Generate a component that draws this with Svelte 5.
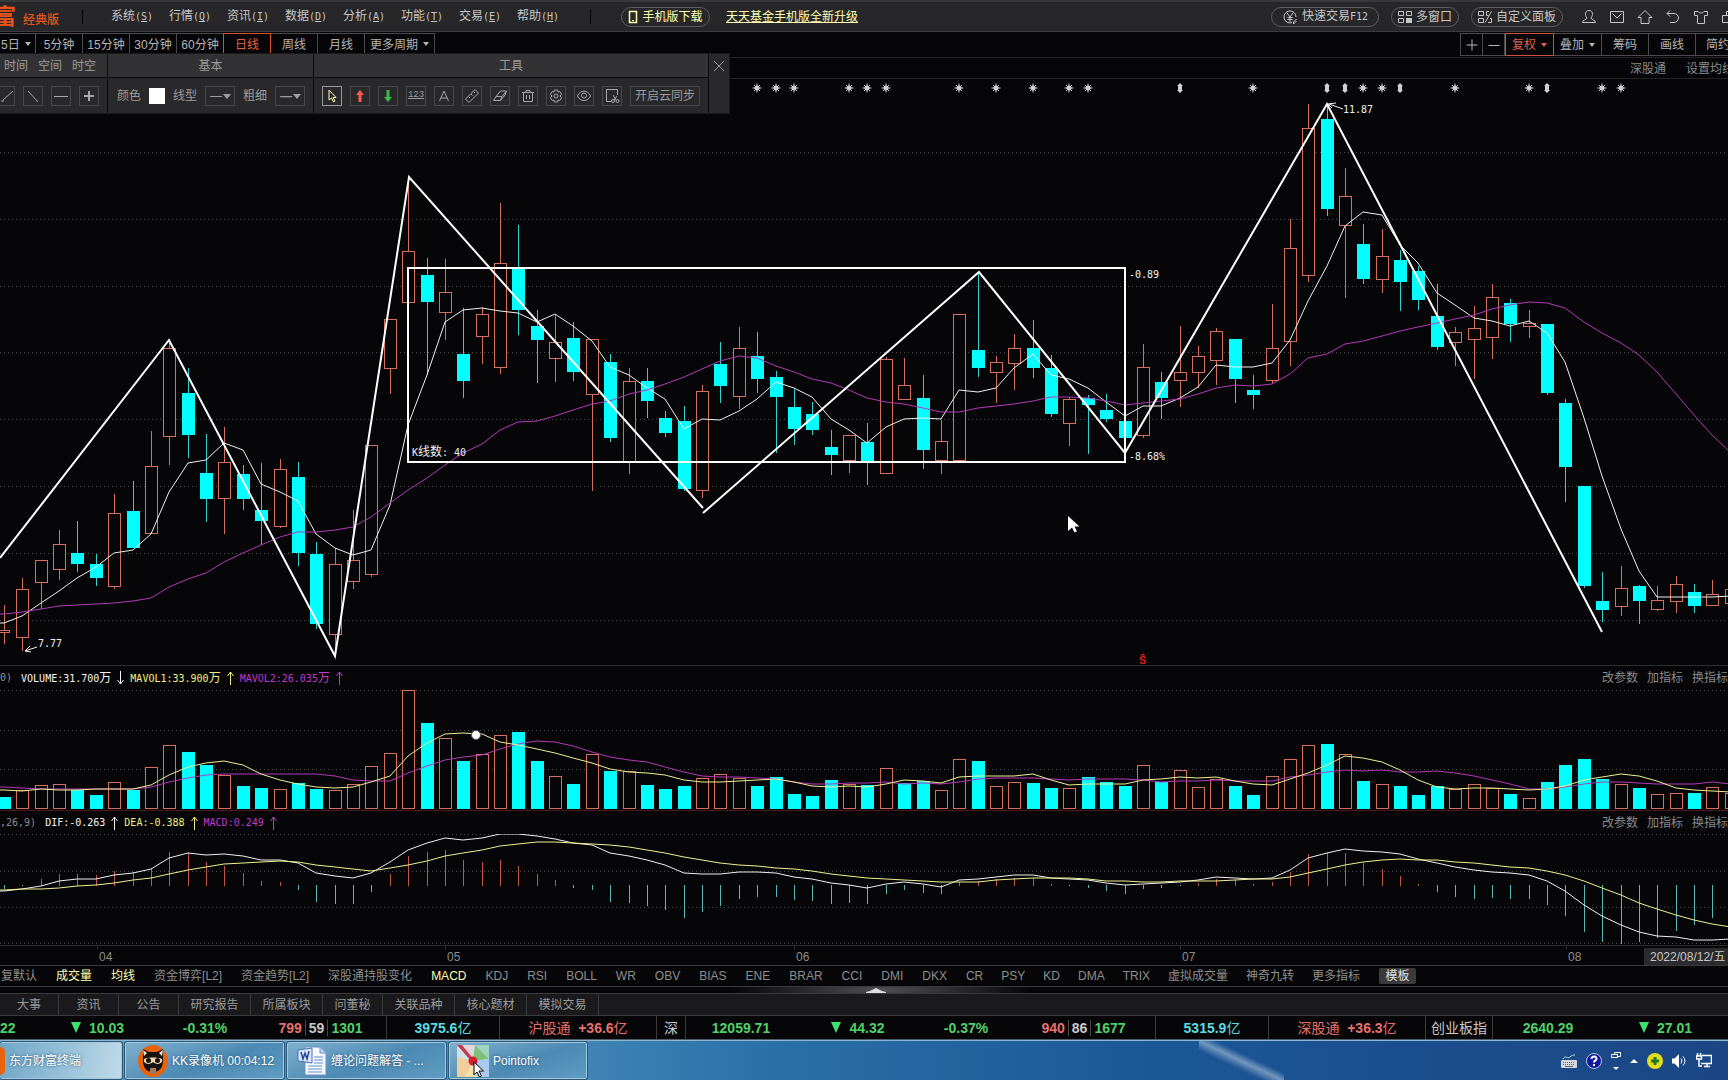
<script>
  const menus = [['系统', 'S'], ['行情', 'Q'], ['资讯', 'I'], ['数据', 'D'], ['分析', 'A'], ['功能', 'T'], ['交易', 'E'], ['帮助', 'H']];
  const periods = ['5分钟', '15分钟', '30分钟', '60分钟', '日线', '周线', '月线'];
  const indicatorGroups = [
    ['复默认', '成交量', '均线', '资金博弈[L2]', '资金趋势[L2]', '深股通持股变化', 'MACD', 'KDJ', 'RSI', 'BOLL', 'WR', 'OBV', 'BIAS', 'ENE', 'BRAR', 'CCI', 'DMI', 'DKX'],
    ['CR', 'PSY', 'KD', 'DMA', 'TRIX', '虚拟成交量', '神奇九转', '更多指标']
  ];
  const lit = ['成交量', '均线', 'MACD'];
  const infoTabs = ['大事', '资讯', '公告', '研究报告', '所属板块', '问董秘', '关联品种', '核心题材', '模拟交易'];

  // [rising, high, body top, body bottom, low]
  const candles = [
    [1,605,630,632,644],[1,578,589,637,651],[1,560,560,582,609],[1,530,544,569,580],[0,521,553,564,572],[0,554,564,578,586],
    [1,494,513,586,589],[0,481,511,548,548],[1,431,466,533,533],[1,342,348,436,465],[0,368,393,435,458],[0,434,473,499,522],
    [1,427,462,498,534],[0,465,474,499,510],[0,463,510,521,545],[1,459,469,526,528],[0,462,477,553,566],[0,542,554,624,629],
    [1,548,564,634,652],[1,510,560,581,589],[1,445,445,574,577],[1,319,319,368,394],[1,180,251,302,302],[0,258,275,302,375],
    [1,259,292,312,340],[0,308,354,381,398],[1,307,314,336,364],[1,203,263,367,374],[0,225,268,310,335],[0,310,326,340,383],
    [1,315,342,358,382],[0,322,338,372,381],[1,339,339,394,491],[0,354,362,438,442],[1,368,381,462,474],[0,368,381,401,418],
    [0,411,418,433,437],[0,406,421,489,491],[1,385,391,490,498],[0,342,364,386,403],[1,327,348,396,409],[0,332,356,379,393],
    [0,371,377,397,453],[0,389,407,429,445],[0,402,414,430,435],[0,430,447,455,475],[1,435,435,460,473],[0,423,442,462,485],
    [1,357,359,473,473],[1,358,385,399,399],[0,375,398,450,469],[1,420,441,460,474],[1,314,314,460,460],[0,272,350,368,377],
    [1,356,362,372,403],[1,334,348,363,390],[0,320,348,368,378],[0,355,368,414,417],[1,397,399,423,446],[0,395,398,405,454],
    [0,394,410,419,422],[0,421,421,438,453],[1,344,367,435,438],[0,372,382,398,419],[1,326,372,380,407],[1,346,356,372,388],
    [1,328,331,360,385],[0,339,339,379,403],[0,375,390,395,409],[1,304,348,380,383],[1,219,248,341,366],[1,104,128,275,282],
    [0,104,119,209,216],[1,168,196,225,298],[0,224,244,279,284],[1,229,256,279,293],[0,250,260,282,311],[0,266,271,300,310],
    [0,284,316,347,350],[1,327,332,342,366],[1,306,328,339,379],[1,284,297,337,359],[0,299,303,324,342],[1,310,323,326,338],
    [0,324,324,393,395],[0,399,403,467,502],[0,486,486,586,588],[0,572,601,610,622],[1,566,588,606,616],[0,585,586,601,624],
    [1,586,600,609,611],[1,576,584,601,613],[0,584,592,606,613],[1,580,594,605,605],[1,585,589,603,603]
  ];
  const maFast = [623,616,603,591,578,567,553,550,534,492,463,460,443,450,484,492,501,534,548,555,550,505,425,375,322,310,308,311,313,322,314,326,341,367,375,388,399,429,419,420,411,399,382,388,397,419,430,443,427,419,418,419,390,392,388,368,354,375,379,388,402,416,406,406,398,387,365,367,367,363,340,301,266,226,212,215,245,263,293,305,318,321,326,321,333,362,418,476,529,571,597,597,597,597,596];
  const maSlow = [614,612,609,606,605,604,603,601,598,587,579,573,562,553,545,537,532,532,530,527,517,503,490,478,465,453,444,430,422,421,416,410,404,401,394,390,384,377,369,361,356,358,366,372,379,383,390,398,402,404,408,412,412,408,406,404,401,397,397,398,401,405,403,401,399,394,388,385,386,384,374,358,354,344,341,336,331,327,323,319,315,309,305,302,303,308,322,333,343,355,372,394,415,435,453];

  const volTops = [797,790,785,784,790,795,782,790,767,745,752,765,775,786,788,789,783,789,790,784,766,753,690,723,738,761,754,735,732,761,776,784,754,771,771,785,789,786,778,774,778,786,777,794,796,780,784,785,768,783,781,790,759,761,786,782,783,788,788,777,782,786,765,782,770,787,779,786,795,776,759,745,744,754,781,784,786,795,786,789,784,788,794,798,782,765,759,779,784,788,794,793,793,787,793];
  const volUpExtra = { 0: 0, 39: 1, 49: 0 };
  const volFast = [790,791,789,790,790,789,789,789,785,775,767,763,761,765,774,780,784,787,788,787,782,776,756,743,734,733,734,742,745,749,753,758,763,769,772,773,775,780,782,782,781,780,779,782,786,787,786,787,784,780,781,783,777,776,776,776,774,780,785,784,784,784,780,779,777,778,777,781,784,785,779,773,765,756,758,762,770,780,787,789,788,788,789,790,789,786,780,777,774,776,781,788,790,791,792];
  const volSlow = [787,788,789,789,789,789,789,789,787,782,778,775,774,774,774,774,774,774,776,780,781,781,773,766,760,757,755,749,744,741,742,746,752,757,760,762,767,772,776,777,777,778,779,782,784,784,783,783,782,784,783,784,782,779,778,778,778,779,780,779,779,779,780,782,781,781,780,781,781,781,777,775,772,770,771,770,772,772,771,773,776,780,784,789,789,787,784,782,782,783,784,784,784,782,784];

  const hist = [889,886,879,874,874,875,871,872,868,852,853,862,866,873,881,882,890,902,904,904,892,874,856,852,850,860,862,860,866,874,880,888,890,902,903,906,910,918,912,906,899,897,897,900,901,904,903,904,894,890,893,894,882,881,879,878,878,884,886,888,891,894,889,888,886,883,879,880,884,882,872,854,853,853,863,869,876,884,892,897,899,898,899,899,905,916,932,942,944,942,938,931,925,918,912];
  const dif = [891,889,886,881,879,879,875,873,869,858,853,855,854,856,860,860,863,873,876,878,873,862,850,843,838,840,838,834,834,836,839,843,845,853,856,860,865,873,874,874,872,872,873,877,879,883,885,888,884,882,884,887,880,879,877,875,875,878,879,880,883,885,884,883,882,880,877,878,879,878,870,858,853,849,851,852,854,859,863,867,870,872,873,875,881,891,905,916,925,932,936,937,940,940,939];
  const dea = [890,889,889,888,886,885,883,880,878,874,870,867,864,863,862,861,862,865,867,869,871,868,865,861,856,853,850,846,844,842,842,843,844,845,847,850,853,857,860,863,865,866,868,869,871,874,876,878,879,880,881,882,882,882,880,879,878,878,878,879,881,881,882,882,881,881,881,880,879,879,877,873,869,865,862,860,859,860,860,862,863,865,867,868,871,875,881,888,895,903,909,915,920,924,927];

  const stars = [41,42,43,46,47,48,52,54,56,58,59,68,74,75,79,83,87,88];
  const diamonds = [64,72,73,76,84];
  const months = [['04', 97], ['05', 445], ['06', 794], ['07', 1180], ['08', 1566]];

  const x = (i) => Math.round(4 + i * 18.37);
  const line = (ys) => ys.map((y, i) => (i === 0 ? `0,${y} ` : '') + `${x(i)},${y}`).join(' ');
  const volUp = (i) => (i in volUpExtra ? volUpExtra[i] : candles[i][0]);

  const volTitle = [['w', 'VOLUME:31.700', '万', 'down'], ['y', 'MAVOL1:33.900', '万', 'up'], ['m', 'MAVOL2:26.035', '万', 'up']];
  const macdTitle = [['w', 'DIF:-0.263', '', 'up'], ['y', 'DEA:-0.388', '', 'up'], ['m', 'MACD:0.249', '', 'up']];
</script>

{#snippet titleRow(lead, items)}
  <div class="ptitle">
    <span class="lead">{lead}</span>
    {#each items as [tone, text, unit, dir]}
      <span class="val {tone}">{text}<i>{unit}</i></span>
      <svg class="arr {tone}" viewBox="0 0 9 14" width="9" height="14" fill="none" stroke="currentColor">
        {#if dir === 'up'}<path d="M4.5 1V14M1.5 5l3-4 3 4" />{:else}<path d="M4.5 0V13M1.5 9l3 4 3-4" />{/if}
      </svg>
    {/each}
    <div class="plinks"><button>改参数</button><button>加指标</button><button class="cut">换指标</button></div>
  </div>
{/snippet}

<div class="page">
  <header class="menu">
    <div class="brand"><b>富</b><span>经典版</span></div>
    <nav class="menus">
      {#each menus as [name, key]}
        <button>{name}<small>(<u>{key}</u>)</small></button>
      {/each}
    </nav>
    <button class="pill phone">
      <svg viewBox="0 0 10 14" width="10" height="14" fill="none" stroke="currentColor"><path d="M1.500 1.500h7v11h-7z" stroke-width="1.500" /><path d="M4 10.5h2" /></svg>
      手机版下载
    </button>
    <a class="promo" href="#fund">天天基金手机版全新升级</a>
    <div class="right">
      <button class="pill w108">
        <svg viewBox="0 0 16 16" width="16" height="16" fill="none" stroke="currentColor"><path d="M14 8A6 6 0 1 0 10 13.600M5 4l3 4 3-4M8 8v5M5.500 8.500h5M5.500 10.500h5M14.500 10l-3 3v2l3-3" /></svg>
        <span>快速交易<small>F12</small></span>
      </button>
      <button class="pill w68">
        <svg viewBox="0 0 14 14" width="14" height="14" fill="none" stroke="currentColor"><path d="M.5 1.500h5v4h-5zM8.500 1.500h5v4h-5zM.5 8.500h5v4h-5z" /><path d="M8 8h6v5H8z" fill="currentColor" stroke="none" /></svg>
        多窗口
      </button>
      <button class="pill w92">
        <svg viewBox="0 0 14 14" width="14" height="14" fill="none" stroke="currentColor"><path d="M.5 1.500h5v4h-5zM11 1.500H8.500v4h2M13.500 1.500L7 12.500M.5 8.500h5v4h-5zM10 12.500h3.500V8.500H12" /></svg>
        自定义面板
      </button>
      <div class="sys">
        <button aria-label="用户"><svg viewBox="0 0 16 16" width="16" height="16"><path d="M6 9C3.500 6 4 1.500 8 1.500S12.500 6 10 9c0 2 4.500 1.500 4.500 4.500h-13C1.500 10.500 6 11 6 9z" /></svg></button>
        <button aria-label="邮件"><svg viewBox="0 0 16 16" width="16" height="16"><path d="M1.500 2.500h13v11h-13zM3.500 4.500L8 9l4.500-4.500" /></svg></button>
        <button aria-label="主页"><svg viewBox="0 0 16 16" width="16" height="16"><path d="M8 1.500L1 8.500h3v6h8v-6h3z" /></svg></button>
        <button aria-label="返回"><svg viewBox="0 0 16 16" width="16" height="16"><path d="M5 1.500L2 4.500l3 3M2 4.500h7a4.500 4.500 0 0 1 0 9H5" /></svg></button>
        <button aria-label="皮肤"><svg viewBox="0 0 16 16" width="16" height="16"><path d="M5 2.500H1.500v4h3v8h7v-8h3v-4H11c-1 2-5 2-6 0z" /></svg></button>
        <button aria-label="窗口" class="half"><svg viewBox="0 0 16 16" width="16" height="16"><path d="M5.500 6V2.500h9v8H11M1.500 6.500h9v7h-9z" /></svg></button>
      </div>
    </div>
  </header>

  <div class="bar">
    <div class="periods">
      <button class="p0">5日<i class="caret"></i></button>
      {#each periods as p}<button class:active={p === '日线'}>{p}</button>{/each}
      <button class="more">更多周期<i class="caret"></i></button>
    </div>
    <div class="views">
      <button class="sq" aria-label="放大"><svg viewBox="0 0 12 12" width="12" height="12" stroke="currentColor"><path d="M6 .5v11M.5 6h11" /></svg></button>
      <button class="sq" aria-label="缩小"><svg viewBox="0 0 12 12" width="12" height="12" stroke="currentColor"><path d="M.5 6.500h11" /></svg></button>
      <button class="drop hot">复权<i class="caret"></i></button>
      <button class="drop">叠加<i class="caret"></i></button>
      <button>筹码</button>
      <button>画线</button>
      <button class="last">简约</button>
    </div>
  </div>

  <div class="sub"><span>深股通</span><button>设置均线</button></div>

  <section class="toolbox">
    <div class="col c1">
      <div class="head"><span>时间</span><span>空间</span><span>时空</span></div>
      <div class="body">
        <button class="t first" aria-label="斜线"><svg viewBox="0 0 18 18"><path d="M1 14h3M3 13L13 4" /></svg></button>
        <button class="t" aria-label="反斜线"><svg viewBox="0 0 18 18"><path d="M4 4l10 11" /></svg></button>
        <button class="t" aria-label="水平线"><svg viewBox="0 0 18 18"><path d="M2 9.500h14" /></svg></button>
        <button class="t bold" aria-label="添加"><svg viewBox="0 0 18 18"><path d="M9 4v10M4 9h10" /></svg></button>
      </div>
    </div>
    <div class="col c2">
      <div class="head">基本</div>
      <div class="body">
        <label for="clr">颜色</label><input id="clr" type="color" value="#ffffff" />
        <label for="ls">线型</label><span class="sel"><select id="ls"><option>—</option></select></span>
        <label for="lw">粗细</label><span class="sel b"><select id="lw"><option>—</option></select></span>
      </div>
    </div>
    <div class="col c3">
      <div class="head">工具</div>
      <div class="body">
        <button class="t on" aria-label="选择"><svg viewBox="0 0 18 18"><path d="M6 3v10l2.500-2 2 4 1.500-1-2-3.500h3z" stroke="#ffffb0" /></svg></button>
        <button class="t" aria-label="上箭头"><svg viewBox="0 0 18 18"><path d="M9 3l4 5h-2.500v7h-3V8H5z" fill="#ff5a50" stroke="none" /></svg></button>
        <button class="t" aria-label="下箭头"><svg viewBox="0 0 18 18"><path d="M9 15l4-5h-2.500V3h-3v7H5z" fill="#3cb84a" stroke="none" /></svg></button>
        <button class="t num" aria-label="标数">123</button>
        <button class="t" aria-label="文字"><svg viewBox="0 0 18 18"><path d="M4.500 14L9 4l4.500 10M6 11h6" /></svg></button>
        <button class="t" aria-label="测量"><svg viewBox="0 0 18 18"><path d="M2.500 12L12 2.500l3.500 3.500L6 15.500zM8 7l1.500 1.500M10.500 4.500L12 6M5.500 9.500L7 11" /></svg></button>
        <button class="t" aria-label="橡皮"><svg viewBox="0 0 18 18"><path d="M2.500 13.500L5 9.500 9.500 4h6L14 8l-4.500 5.500zM5 9.500h6L15 4.500M11 9.500l-1.500 4" /></svg></button>
        <button class="t" aria-label="删除"><svg viewBox="0 0 18 18"><path d="M3 5.500h12M7 5V3.500h4V5M4.500 5.500v9h9v-9M7.500 8v4M10.500 8v4" /></svg></button>
        <button class="t" aria-label="设置"><svg viewBox="0 0 18 18"><circle cx="9" cy="9" r="2" /><path d="M7.500 3h3l.5 2 2-.5 1.500 2.500L13 9l1.500 2-1.500 2.500-2-.5-.5 2h-3L7 13l-2 .5L3.500 11 5 9 3.500 7 5 4.500 7 5z" /></svg></button>
        <button class="t" aria-label="显示"><svg viewBox="0 0 18 18"><path d="M2.500 9C5 2.500 13 2.500 15.500 9 13 15 5 15 2.500 9z" /><circle cx="9" cy="8.500" r="2.500" /></svg></button>
        <button class="t" aria-label="截图"><svg viewBox="0 0 18 18"><path d="M8 14.500H3.500v-12h11V8M10 8l3 5M14 9l-3 4" /><circle cx="10" cy="14" r="1.500" /><circle cx="14.500" cy="14" r="1.500" /></svg></button>
        <button class="sync">开启云同步</button>
      </div>
    </div>
    <button class="close" aria-label="关闭"><svg viewBox="0 0 12 12" width="12" height="12" stroke="#999"><path d="M1 1l10 10M11 1L1 11" /></svg></button>
  </section>

  <main>
    <svg class="chart" viewBox="0 79 1728 586" role="img" aria-label="日线">
      <g class="grid">{#each [152,219,286,352,419,486,553,620] as y}<path d="M0 {y}.5H1728" />{/each}</g>
      <g class="marks">
        {#each stars as i}<path transform="translate({x(i)} 88)" d="M-4.500 0h9M0-4.500v9M-3-3l6 6M3-3l-6 6M-2 0h4" /><circle cx={x(i)} cy="88" r="2.500" />{/each}
        {#each diamonds as i}<path class="f" transform="translate({x(i)} 88)" d="M0-5l3 3h-1v4h1l-3 3-3-3h1v-4h-1z" />{/each}
      </g>
      <g shape-rendering="crispEdges">
        {#each candles as [up, h, t, b, l], i}
          {#if up}
            <path class="red" d="M{x(i)}.5 {h}V{t}M{x(i)}.5 {b}V{l}M{x(i) - 6}.5 {t}.5h12V{b}.5h-12z" />
          {:else}
            <path class="cyl" d="M{x(i)}.5 {h}V{l}" /><rect class="cyan" x={x(i) - 6} y={t} width="13" height={Math.max(b - t, 2)} />
          {/if}
        {/each}
      </g>
      <polyline class="ln w" points={line(maFast)} />
      <polyline class="ln m" points={line(maSlow)} />
      <g class="draw">
        <path d="M0 558L169 340L335 656L409 177L703 508M703 513L979 272L1125 453L1327 104L1602 632" />
        <path d="M408 268H1125V462H408z" />
      </g>
      <g class="lbl">
        <text x="412" y="456">K<tspan class="cj">线数</tspan>: 40</text>
        <text x="1129" y="278">-0.89</text>
        <text x="1129" y="460">-8.68%</text>
        <text x="1343" y="113">11.87</text>
        <text x="38" y="647">7.77</text>
      </g>
      <path class="ln w" d="M1343 109L1329 104M1336 103L1328 104L1332 108M37 647L25 651M30 646L25 651L31 652" />
      <text class="sig" x="1139" y="664">S</text>
      <path d="M1140 655.500l3-2 3 2z" fill="#e01818" />
      <path d="M1068 516v15l4-3.500 2.500 5 2.500-1.200-2.500-4.800h5z" fill="#fff" />
    </svg>

    {@render titleRow('0)', volTitle)}
    <svg class="chart" viewBox="0 690 1728 120" role="img" aria-label="成交量">
      <g class="grid">{#each [690,730,769] as y}<path d="M0 {y}.5H1728" />{/each}</g>
      <g shape-rendering="crispEdges">
        {#each volTops as t, i}
          {#if volUp(i)}<rect class="red" x={x(i) - 5.5} y={t + 0.5} width="12" height={808 - t} />
          {:else}<rect class="cyan" x={x(i) - 6} y={t} width="13" height={809 - t} />{/if}
        {/each}
      </g>
      <polyline class="ln m" points={line(volSlow)} />
      <polyline class="ln y" points={line(volFast)} />
      <circle cx="476" cy="735" r="4.500" fill="#fff" stroke="#555" />
    </svg>

    <div class="redline"></div>
    {@render titleRow(',26,9)', macdTitle)}
    <svg class="chart" viewBox="0 834 1728 111" role="img" aria-label="MACD">
      <g class="grid">{#each [834,871,907,943] as y}<path d="M0 {y}.5H1728" />{/each}</g>
      <g shape-rendering="crispEdges">
        {#each hist as v, i}<path class={v < 886 ? 'redh' : 'cyh'} d="M{x(i)}.5 {v < 886 ? 886 : 885}V{v}" />{/each}
      </g>
      <polyline class="ln w" points={line(dif)} />
      <polyline class="ln y" points={line(dea)} />
    </svg>
    <svg class="axis" viewBox="0 946 1728 19">
      {#each months as [m, mx]}
        <path d="M{mx}.5 946v3" stroke="#2c2c2e" /><text x={mx + 2} y="961">{m}</text>
      {/each}
      <rect x="1644" y="948" width="84" height="17" fill="#2b2b2d" />
      <text class="date" x="1650" y="961">2022/08/12/五</text>
    </svg>
  </main>

  <nav class="inds">
    {#each indicatorGroups as group, gi}
      <div class="igroup" class:tight={gi === 1}>
        {#each group as n}<button class:lit={lit.includes(n)}>{n}</button>{/each}
      </div>
    {/each}
    <button class="tpl">模板</button>
  </nav>
  <div class="grip"><svg viewBox="0 0 20 5" width="20" height="5"><path d="M0 5v-1l4-1 6-3 6 3 4 1v1z" fill="#ddd" /></svg></div>
  <nav class="info">
    {#each infoTabs as t}<button class:wide={t.length > 3}>{t}</button>{/each}
  </nav>

  <div class="ticker">
    <span class="g start">22</span>
    <span class="g"><i class="dn"></i>10.03</span>
    <span class="g">-0.31%</span>
    <span class="cnt"><b class="r">799</b><b>59</b><b class="g">1301</b></span>
    <span class="c bl">3975.6<em>亿</em></span>
    <span class="r bl"><em>沪股通</em>&nbsp; +36.6<em>亿</em></span>
    <span class="bl"><em>深</em></span>
    <span class="g bl">12059.71</span>
    <span class="g"><i class="dn"></i>44.32</span>
    <span class="g">-0.37%</span>
    <span class="cnt"><b class="r">940</b><b>86</b><b class="g">1677</b></span>
    <span class="c bl">5315.9<em>亿</em></span>
    <span class="r bl"><em>深股通</em>&nbsp; +36.3<em>亿</em></span>
    <span class="bl"><em>创业板指</em></span>
    <span class="g bl">2640.29</span>
    <span class="g"><i class="dn"></i>27.01</span>
  </div>

  <footer class="task">
    <button class="app a1"><i class="orb"></i>东方财富终端</button>
    <button class="app a2">
      <svg viewBox="0 0 30 32" width="30" height="32"><ellipse cx="15" cy="16" rx="15" ry="16" fill="#e8620c" /><path d="M5 4l6 3h8l6-3v12c0 8-5 11-10 11S5 24 5 16z" fill="#17120f" /><path d="M5 5l4 3-3 3zM25 5l-4 3 3 3z" fill="#f3e9d8" /><path d="M6 14c4-2 14-2 18 0v3c-3 3-7 2-9 0-2 2-6 3-9 0z" fill="#f0d9b4" /><circle cx="10.500" cy="15.500" r="2.500" fill="#17120f" /><circle cx="19.500" cy="15.500" r="2.500" fill="#17120f" /><path d="M12 23h6v6h-6z" fill="#9c7a5c" /></svg>
      KK录像机 00:04:12
    </button>
    <button class="app a3">
      <svg viewBox="0 0 30 32" width="30" height="32"><path d="M8 2h15l6 6v22H8z" fill="#f4f8ff" stroke="#6d8fc9" /><path d="M23 2v6h6" fill="#c6d6f0" stroke="#6d8fc9" /><path d="M11 21h14M11 24h14M11 27h14M17 12h9M17 15h9M17 18h9" stroke="#6f8fc4" /><path d="M1 5l14-2v15L1 16z" fill="#dce8fa" stroke="#4a6fb5" /><path d="M4 7l2 7 2-6 2 6 2-8" fill="none" stroke="#1f4a9c" stroke-width="1.500" /></svg>
      缠论问题解答 - ...
    </button>
    <button class="app a4">
      <svg viewBox="0 0 32 32" width="32" height="32"><rect width="32" height="32" rx="2" fill="#cfe0e6" /><path d="M16 16L6 0h12z" fill="#e7d2e0" /><path d="M18 0h14v14z" fill="#9fd4c0" /><path d="M18 0L32 14 16 16z" fill="#7cc07a" /><path d="M16 16l16-2v18H18z" fill="#a9c9ee" /><path d="M0 12l16 4-6 16H0z" fill="#f1cf9d" /><path d="M16 16l4 16H8z" fill="#f6e2a8" /><path d="M0 0h5l12 15-2 2z" fill="#c23a4c" /><circle cx="16" cy="16" r="4.500" fill="#d21f2b" /><path d="M17 17v13l3-3 2.500 5 2-1-2.500-5h4.500z" fill="#fff" stroke="#000" /></svg>
      Pointofix
    </button>
    <div class="tray">
      <svg viewBox="0 0 16 14" width="16" height="14"><path d="M2 5c2-4 5 0 7-2s3-2 5-2" fill="none" stroke="#cdd" /><rect x="0" y="6" width="16" height="8" rx="1" fill="#d4d8dc" /><path d="M2 8.500h12M2 10.500h12" stroke="#667" stroke-dasharray="1 1" /><path d="M4 12.500h8" stroke="#667" /></svg>
      <svg viewBox="0 0 16 16" width="16" height="16"><circle cx="8" cy="8" r="7.500" fill="#14189c" stroke="#b8c4e8" /><path d="M5.500 6c0-3.500 5.500-3 5 0-.3 1.500-2.500 1.500-2.500 3.500M8 11v2" fill="none" stroke="#fff" stroke-width="2" /></svg>
      <svg viewBox="0 0 10 20" width="10" height="20" fill="none" stroke="#fff"><path d="M3.500 3V1.500h6v4H7M.5 3.500h6v3h-6z" /><path d="M2 16h6l-3 3z" fill="#fff" stroke="none" /></svg>
      <svg viewBox="0 0 8 8" width="8" height="8"><path d="M0 6l4-4 4 4z" fill="#fff" /></svg>
      <svg viewBox="0 0 16 16" width="16" height="16"><circle cx="8" cy="8" r="8" fill="#e3dc1e" /><path d="M8 4v8M4 8h8" stroke="#1d7a1d" stroke-width="3" /></svg>
      <svg viewBox="0 0 15 14" width="15" height="14"><path d="M0 4.500h2.500L7 0v14L2.500 9.500H0z" fill="#fff" /><path d="M9 4.500q2 2.500 0 5M11 2.500q4 4.500 0 9" fill="none" stroke="#fff" /></svg>
      <svg viewBox="0 0 16 15" width="16" height="15" fill="none" stroke="#fff"><path d="M6 2.500h9.500v8H5M8 13.500h6M11 11v2.500M1.500 0v3M4.500 0v3M.5 3h5v3h-5zM3 6v7h3" stroke-width="1.500" /></svg>
    </div>
  </footer>
</div>

<style>
  :global(body) { background: #060608; }
  .page { position: relative; overflow: hidden; display: flex; flex-direction: column; background: #060608; color: #b4b4b4; font: 12px/16px "Liberation Sans", "Noto Sans CJK SC", sans-serif; white-space: nowrap; }
  .page *, .page *::after { box-sizing: border-box; }
  button { font: inherit; color: inherit; background: none; border: 0; padding: 0; margin: 0; white-space: nowrap; }
  i, em { font-style: normal; }
  small { font: 10px/16px "DejaVu Sans Mono", monospace; }

  .menu { height: 32px; display: flex; align-items: center; background: #272729; border-top: 2px solid #38383a; border-bottom: 1px solid #3c3c3e; color: #c6c6c6; }
  .brand { display: flex; align-items: center; width: 83px; border-right: 1px solid #000; height: 14px; color: #e4541c; }
  .brand b { width: 16px; font-size: 22px; direction: rtl; overflow: hidden; line-height: 28px; margin-right: 7px; }
  .brand span { padding-top: 6px; font-weight: 500; }
  .menus { display: flex; width: 508px; padding-left: 28px; border-right: 1px solid #000; height: 14px; align-items: center; }
  .menus button { width: 58px; text-align: left; }
  .pill { height: 20px; border: 1px solid #5c5c5e; border-radius: 10px; display: flex; align-items: center; justify-content: center; gap: 4px; }
  .phone { width: 89px; margin: 0 16px 0 30px; color: #ffffb4; }
  .promo { color: #ffffb4; }
  .right { margin-left: auto; display: flex; align-items: center; gap: 12px; }
  .w108 { width: 108px; } .w68 { width: 68px; } .w92 { width: 92px; }
  .sys { display: flex; gap: 12px; padding-left: 6px; overflow: hidden; height: 16px; }
  .sys button { width: 16px; height: 16px; }
  .sys .half { width: 7px; overflow: hidden; }
  .sys svg { display: block; fill: none; stroke: currentColor; }

  .bar { height: 25px; display: flex; justify-content: space-between; align-items: flex-start; padding-top: 1px; }
  .periods, .views { display: flex; border-top: 1px solid #4a4a4c; height: 23px; }
  .periods button { width: 47px; border-right: 1px solid #4a4a4c; }
  .periods .p0 { width: 36px; text-align: left; padding-left: 1px; }
  .periods .active { color: #e8603c; border: 1px solid #d8502c; margin: -1px 0 0 -1px; width: 48px; }
  .periods .more { width: 70px; }
  .caret { display: inline-block; border: 3px solid transparent; border-top: 4px solid currentColor; border-bottom: 0; margin: 0 0 3px 5px; }
  .views { border: 1px solid #4a4a4c; border-right: 0; }
  .views button { width: 47px; border-right: 1px solid #4a4a4c; display: flex; align-items: center; justify-content: center; }
  .views .sq { width: 22px; }
  .views .drop { width: 48px; }
  .views .drop .caret { margin-bottom: 0; }
  .views .hot { width: 49px; color: #e0604c; border: 1px solid #d0503c; margin: -1px 0; }
  .views .last { width: 32px; overflow: hidden; border: 0; justify-content: flex-start; padding-left: 10px; }
  .sub { height: 22px; border-top: 1px solid #222224; border-bottom: 1px solid #222224; display: flex; justify-content: flex-end; align-items: center; gap: 20px; color: #8a8a8a; padding-top: 2px; }
  .sub button { width: 42px; overflow: hidden; text-align: left; }

  .toolbox { position: absolute; left: 0; top: 53px; width: 730px; height: 61px; display: flex; background: #29292b; color: #9c9c9c; border: 1px solid #1a1a1c; border-left: 0; }
  .col { border-right: 1px solid #0c0c0e; display: flex; flex-direction: column; }
  .c1 { width: 108px; } .c2 { width: 206px; } .c3 { width: 395px; }
  .head { height: 24px; background: #323234; border-bottom: 1px solid #0c0c0e; display: flex; align-items: center; justify-content: center; gap: 10px; }
  .c1 .head { justify-content: flex-start; padding-left: 4px; }
  .body { flex: 1; display: flex; align-items: center; gap: 8px; padding-left: 8px; }
  .c1 .body { padding-left: 0; }
  .c2 .body { padding-left: 9px; }
  .t { width: 20px; height: 20px; border: 1px solid #48484a; flex: none; }
  .t svg { display: block; width: 18px; height: 18px; fill: none; stroke: #a8a8a8; }
  .t.first { width: 15px; border-left: 0; }
  .t.bold svg { stroke-width: 2; }
  .t.on { border-color: #9a9a9a; }
  .t.num { font: 9px/10px "Liberation Mono", monospace; padding-bottom: 2px; text-decoration: underline; }
  .sync { width: 70px; height: 20px; border: 1px solid #48484a; line-height: 16px; }
  input[type="color"] { width: 16px; height: 16px; padding: 0; border: 0; background: #fff; }
  input[type="color"]::-webkit-color-swatch-wrapper { padding: 0; }
  input[type="color"]::-webkit-color-swatch { border: 0; }
  .sel { position: relative; width: 30px; height: 20px; border: 1px solid #48484a; }
  .sel::after { content: ""; position: absolute; right: 3px; top: 7px; border: 4px solid transparent; border-top: 5px solid #a0a0a0; border-bottom: 0; pointer-events: none; }
  .sel select { appearance: none; background: none; border: 0; color: inherit; font: inherit; width: 28px; height: 18px; padding: 0 0 0 4px; }
  .sel.b select { font-weight: bold; }
  .close { flex: 1; background: #29292b; display: flex; justify-content: center; padding-top: 6px; }

  main { display: flex; flex-direction: column; }
  .chart { display: block; width: 100%; height: auto; border-bottom: 1px solid #2c2c2e; box-sizing: content-box !important; }
  .chart:nth-of-type(2) { border-bottom: 0; }
  .redline { height: 1px; background: #4a1818; }
  .axis { display: block; width: 100%; height: auto; font: 12px "Liberation Sans", "Noto Sans CJK SC", sans-serif; fill: #8c8c8c; }
  .axis .date { fill: #c8c8c8; }
  .grid path { stroke: #4c4c4e; stroke-dasharray: 1 3; }
  .marks path { stroke: #d0d0d0; fill: none; }
  .marks circle, .marks .f { fill: #d0d0d0; stroke: none; }
  .red { fill: #060608; stroke: #d4705c; }
  .cyan { fill: #00ffff; }
  .cyl { stroke: #30d0d0; }
  .redh { stroke: #c05848; }
  .cyh { stroke: #58b8b8; }
  .ln { fill: none; stroke-width: 1; }
  .ln.w { stroke: #f0f0f0; } .ln.y { stroke: #f0f090; } .ln.m { stroke: #b438b8; }
  .draw path { fill: none; stroke: #fff; stroke-width: 2; }
  .lbl { font: 10px "DejaVu Sans Mono", "Noto Sans CJK SC", monospace; fill: #f0f0f0; }
  .cj { font-size: 12px; }
  .sig { font: bold 11px "Liberation Sans", sans-serif; fill: #e01818; }
  .ptitle { height: 24px; display: flex; align-items: center; font: 10px/16px "DejaVu Sans Mono", "Noto Sans CJK SC", monospace; }
  .redline + .ptitle { height: 23px; }
  .ptitle .lead { color: #8c8c8c; margin-right: 9px; }
  .val i { font-size: 12px; }
  .val.w, .arr.w { color: #f4f4f4; } .val.y, .arr.y { color: #f0f080; } .val.m, .arr.m { color: #c038c8; }
  .arr { margin: 0 5px; }
  .plinks { margin-left: auto; display: flex; gap: 9px; color: #8a8a8a; font-size: 12px; }
  .plinks .cut { width: 36px; overflow: hidden; text-align: left; }

  .inds { height: 22px; border-top: 1px solid #3a3a3c; border-bottom: 1px solid #3a3a3c; display: flex; align-items: center; gap: 19px; padding-left: 1px; color: #8e8e8e; overflow: hidden; }
  .igroup { display: flex; gap: 19px; }
  .igroup.tight { gap: 18px; }
  .inds .lit { color: #ffffb4; }
  .inds .tpl { width: 37px; height: 16px; background: #3a3a3c; border-radius: 2px; color: #e0e0e0; line-height: 15px; }
  .grip { height: 6px; display: flex; justify-content: center; align-items: flex-end; padding-left: 24px; background: radial-gradient(ellipse 150px 20px at 51% 50%, #505052, #060608); }
  .info { height: 23px; display: flex; background: #1a1a1c; border-top: 1px solid #3a3a3c; border-bottom: 1px solid #3a3a3c; color: #9a9a9a; padding-right: 8px; }
  .info button { width: 60px; border-right: 1px solid #3a3a3c; }
  .info button:first-child { width: 59px; }
  .info .wide { width: 72px; }

  .ticker { height: 24px; display: grid; grid-template-columns: 40fr 115fr 100fr 131fr 113fr 157fr 29fr 111fr 124fr 92fr 143fr 113fr 157fr 67fr 111fr 125fr; color: #c8c8c8; font-size: 14px; font-weight: bold; border-bottom: 1px solid #4c5c68; }
  .ticker > span { display: flex; align-items: center; justify-content: center; min-width: 0; }
  .ticker .bl { border-left: 1px solid #3c3c3e; }
  .ticker .start { justify-content: flex-start; }
  .ticker em { font-weight: normal; font-size: 14px; }
  .g { color: #50d068; } .r { color: #e8706c; } .c { color: #58dce0; }
  .cnt b + b { border-left: 1px solid #48484a; margin-left: 3px; padding-left: 3px; }
  .dn { border: 5px solid transparent; border-top: 11px solid #40e070; border-bottom: 0; margin-right: 8px; }

  .task { height: 40px; display: flex; gap: 3px; border-top: 1px solid #8cb8d4; color: #fff; background: linear-gradient(to top right, transparent 38%, #b4c8e090 50%, transparent 60%) 73% 0 / 85px 40px no-repeat, linear-gradient(90deg, #5f9cc2 0, #3f84b4 34%, #2a6fa8 45%, #1b5896 66%, #1c4f90 80%, #1a4684 100%); }
  .app { height: 37px; margin-top: 1px; border: 1px solid #a8c8dc; border-radius: 2px; display: flex; align-items: center; gap: 4px; background: linear-gradient(160deg, #7fb0cc, #4c8ab4 55%, #5f9cc2); outline: 1px solid #2a5878; text-shadow: 0 0 3px #1c4668; overflow: hidden; }
  .a1 { width: 122px; border-left: 0; background: linear-gradient(100deg, #6fa6c6, #9cc4da 60%, #c0dae8); }
  .a2 { width: 159px; padding-left: 12px; }
  .a3 { width: 159px; padding-left: 9px; }
  .a4 { width: 138px; padding-left: 7px; }
  .orb { width: 5px; height: 28px; background: #e8620c; border-radius: 0 5px 5px 0; }
  .tray { margin-left: auto; display: flex; align-items: center; gap: 9px; padding-right: 16px; }
</style>
